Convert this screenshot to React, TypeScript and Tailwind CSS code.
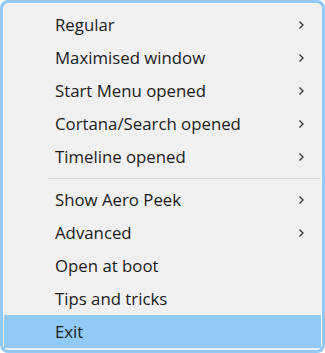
const items: { label: string; sub?: boolean; sep?: boolean; active?: boolean }[] = [
  { label: "Regular", sub: true },
  { label: "Maximised window", sub: true },
  { label: "Start Menu opened", sub: true },
  { label: "Cortana/Search opened", sub: true },
  { label: "Timeline opened", sub: true },
  { label: "", sep: true },
  { label: "Show Aero Peek", sub: true },
  { label: "Advanced", sub: true },
  { label: "Open at boot" },
  { label: "Tips and tricks" },
  { label: "Exit", active: true },
];

function Chevron() {
  return (
    <svg width="7" height="10" viewBox="0 0 7 10" className="text-[#333]">
      <path d="M1.5 1.5 L5 5 L1.5 8.5" fill="none" stroke="currentColor" strokeWidth="1.3" />
    </svg>
  );
}

export default function App() {
  return (
    <div className="h-[353px] w-[325px] overflow-hidden rounded-[8px] border-[3px] border-[#93c9f6] bg-[#93c9f6]">
      <div
        className="flex h-full flex-col rounded-[5px] border border-[#f7f7f7] bg-[#f0f0f0] pt-[4px] text-[16.8px] text-[#1b1b1b]"
        style={{ fontFamily: '"Open Sans", "Noto Sans", sans-serif' }}
      >
        {items.map((it, i) =>
          it.sep ? (
            <div key={i} className="flex h-[10px] items-center pl-[44px]">
              <div className="h-px w-full bg-[#d7d7d7]" />
            </div>
          ) : (
            <div
              key={i}
              className={`flex h-[33px] shrink-0 items-center pl-[51px] pr-[16px] ${
                it.active ? "bg-[#91c9f7]" : ""
              }`}
            >
              <span className="flex-1">{it.label}</span>
              {it.sub && <Chevron />}
            </div>
          )
        )}
      </div>
    </div>
  );
}
